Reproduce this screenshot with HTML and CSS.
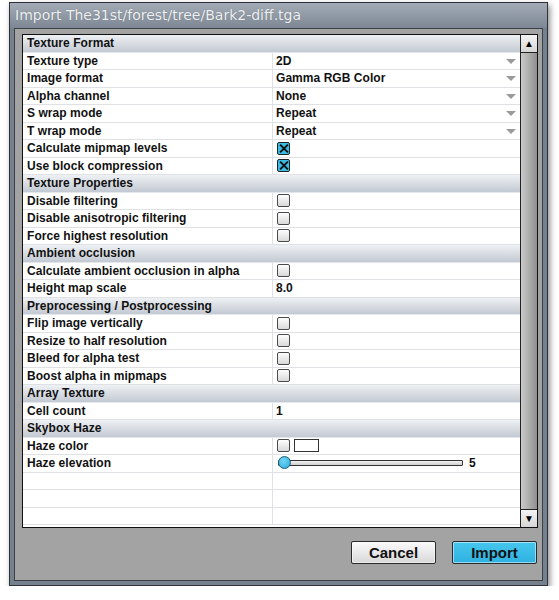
FILE: index.html
```html
<!DOCTYPE html>
<html>

<head>
    <meta charset="UTF-8">
    <title>Import</title>
    <link rel="stylesheet" href="styles.css">
</head>

<body>
    <div class="window">
        <div class="titlebar">Import The31st/forest/tree/Bark2-diff.tga</div>
        <div class="frame">
            <div class="content">
                <div class="panel">
                    <div class="props">
                        <div class="row header">Texture Format</div>
                        <div class="row"><div class="name">Texture type</div><div class="value select">2D</div></div>
                        <div class="row"><div class="name">Image format</div><div class="value select">Gamma RGB Color</div></div>
                        <div class="row"><div class="name">Alpha channel</div><div class="value select">None</div></div>
                        <div class="row"><div class="name">S wrap mode</div><div class="value select">Repeat</div></div>
                        <div class="row"><div class="name">T wrap mode</div><div class="value select">Repeat</div></div>
                        <div class="row"><div class="name">Calculate mipmap levels</div><div class="value"><span class="check on"></span></div></div>
                        <div class="row"><div class="name">Use block compression</div><div class="value"><span class="check on"></span></div></div>
                        <div class="row header">Texture Properties</div>
                        <div class="row"><div class="name">Disable filtering</div><div class="value"><span class="check"></span></div></div>
                        <div class="row"><div class="name">Disable anisotropic filtering</div><div class="value"><span class="check"></span></div></div>
                        <div class="row"><div class="name">Force highest resolution</div><div class="value"><span class="check"></span></div></div>
                        <div class="row header">Ambient occlusion</div>
                        <div class="row"><div class="name">Calculate ambient occlusion in alpha</div><div class="value"><span class="check"></span></div></div>
                        <div class="row"><div class="name">Height map scale</div><div class="value">8.0</div></div>
                        <div class="row header">Preprocessing / Postprocessing</div>
                        <div class="row"><div class="name">Flip image vertically</div><div class="value"><span class="check"></span></div></div>
                        <div class="row"><div class="name">Resize to half resolution</div><div class="value"><span class="check"></span></div></div>
                        <div class="row"><div class="name">Bleed for alpha test</div><div class="value"><span class="check"></span></div></div>
                        <div class="row"><div class="name">Boost alpha in mipmaps</div><div class="value"><span class="check"></span></div></div>
                        <div class="row header">Array Texture</div>
                        <div class="row"><div class="name">Cell count</div><div class="value">1</div></div>
                        <div class="row header">Skybox Haze</div>
                        <div class="row"><div class="name">Haze color</div><div class="value"><span class="check"></span><span class="swatch"></span></div></div>
                        <div class="row"><div class="name">Haze elevation</div><div class="value"><span class="slider"><span class="knob"></span></span><span class="slider-num">5</span></div></div>
                        <div class="row"><div class="name"></div><div class="value"></div></div>
                        <div class="row"><div class="name"></div><div class="value"></div></div>
                        <div class="row"><div class="name"></div><div class="value"></div></div>
                    </div>
                    <div class="scrollbar">
                        <div class="sb-btn">&#9650;</div>
                        <div class="sb-track"></div>
                        <div class="sb-btn down">&#9660;</div>
                    </div>
                </div>
                <div class="buttons">
                    <button class="btn">Cancel</button>
                    <button class="btn primary">Import</button>
                </div>
            </div>
        </div>
    </div>
</body>

</html>
```

FILE: styles.css
```css
/* import dialog */
body {
    margin: 0;
    background: #fff;
    font-family: "Liberation Sans", Arial, sans-serif;
}

.window {
    box-sizing: border-box;
    width: 539px;
    height: 584px;
    margin: 2px 0 0 9px;
    border: 1px solid #2e3136;
    background: #76818e;
    box-shadow: 2px 3px 6px rgba(0, 0, 0, 0.45);
}

.titlebar {
    height: 25px;
    padding-left: 5px;
    font-family: "DejaVu Sans", Verdana, sans-serif;
    font-size: 14px;
    line-height: 24px;
    color: #eef0f2;
    background: linear-gradient(#a3acb6, #7d8794);
    text-shadow: 0 0 1px rgba(0, 0, 0, 0.3);
}

.frame {
    padding: 0 4px 4px 4px;
}

.content {
    box-sizing: border-box;
    height: 553px;
    border: 1px solid #3c4047;
    background: #a3a3a3;
    padding: 5px 4px 0 7px;
}

.panel {
    display: flex;
    height: 492px;
    border: 1px solid #111;
    background: #fff;
}

.props {
    flex: 1;
}

.row {
    box-sizing: border-box;
    display: flex;
    height: 17.5px;
    border-bottom: 1px solid #dfe1e4;
    font-size: 12px;
    font-weight: bold;
    letter-spacing: 0.05px;
    line-height: 16px;
    color: #111;
}

.row.header {
    padding-left: 4px;
    background: linear-gradient(#eef1f4, #c3c9d2);
    border-bottom-color: #e4e7eb;
}

.name {
    box-sizing: border-box;
    width: 250px;
    padding-left: 4px;
    border-right: 1px solid #dfe1e4;
    white-space: nowrap;
}

.value {
    flex: 1;
    display: flex;
    align-items: center;
    padding-left: 3px;
    position: relative;
}

.select::after {
    content: "";
    position: absolute;
    right: 4px;
    top: 6px;
    border-left: 5px solid transparent;
    border-right: 5px solid transparent;
    border-top: 5px solid #9a9a9a;
}

.check {
    box-sizing: border-box;
    display: inline-block;
    width: 13px;
    height: 13px;
    margin-left: 1px;
    border: 1px solid #4a4a4a;
    border-radius: 2px;
    background: linear-gradient(#fdfdfd, #d9d9d9);
    position: relative;
}

.check.on {
    background: #3bbde6;
    border-color: #222;
}

.check.on::before,
.check.on::after {
    content: "";
    position: absolute;
    left: 5px;
    top: 0px;
    width: 2px;
    height: 11px;
    background: #111;
    transform: rotate(45deg);
}

.check.on::after {
    transform: rotate(-45deg);
}

.swatch {
    box-sizing: border-box;
    display: inline-block;
    width: 25px;
    height: 13px;
    margin-left: 4px;
    border: 1px solid #333;
    background: #fff;
}

.slider {
    box-sizing: border-box;
    position: relative;
    display: inline-block;
    width: 185px;
    height: 6px;
    margin-left: 2px;
    border: 1px solid #333;
    border-radius: 1px;
    background: linear-gradient(#f2f2f2, #cfcfcf);
}

.knob {
    box-sizing: border-box;
    position: absolute;
    left: -1px;
    top: -5px;
    width: 13px;
    height: 13px;
    border: 1px solid #1f5f7a;
    border-radius: 50%;
    background: radial-gradient(circle at 40% 35%, #6fd6f5, #2aa9dc);
}

.slider-num {
    margin-left: 6px;
}

.scrollbar {
    display: flex;
    flex-direction: column;
    width: 16px;
    border-left: 1px solid #222;
}

.sb-btn {
    height: 17px;
    border-bottom: 1px solid #222;
    background: linear-gradient(#f4f4f4, #d6d6d6);
    font-size: 10px;
    line-height: 17px;
    text-align: center;
    color: #000;
}

.sb-btn.down {
    border-bottom: none;
    border-top: 1px solid #222;
}

.sb-track {
    flex: 1;
    background: linear-gradient(to right, #c9c9c9, #b3b3b3 40%, #8f8f8f);
}

.buttons {
    display: flex;
    justify-content: flex-end;
    gap: 16px;
    margin-top: 13px;
    padding-right: 1px;
}

.btn {
    width: 85px;
    height: 23px;
    padding: 0;
    border: 1px solid #2a2a2a;
    border-radius: 2px;
    background: linear-gradient(#fafafa, #d8d8d8);
    font-family: "Liberation Sans", Arial, sans-serif;
    font-size: 15px;
    font-weight: bold;
    color: #111;
    box-shadow: inset 0 0 0 1px rgba(255, 255, 255, 0.5);
}

.btn.primary {
    background: linear-gradient(#45c6ee, #2eb2e0);
}
```
